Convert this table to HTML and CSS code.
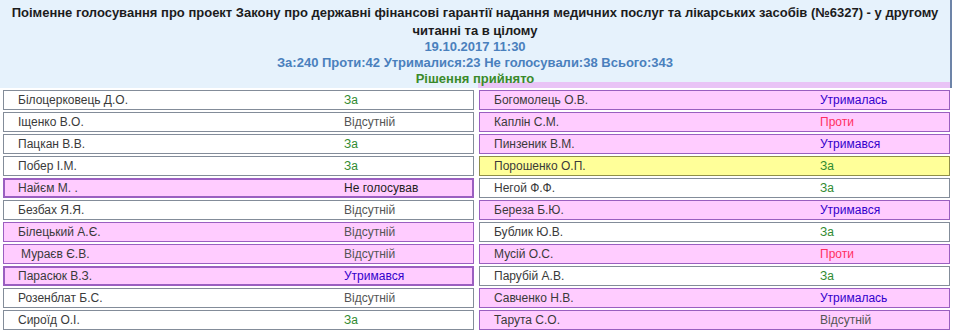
FILE: index.html
```html
<!DOCTYPE html>
<html lang="uk">
<head>
<meta charset="utf-8">
<link rel="stylesheet" href="styles.css">
</head>
<body>
<div class="page">
  <div class="head">
    <div class="title">Поіменне голосування про проект Закону про державні фінансові гарантії надання медичних послуг та лікарських засобів (№6327) - у другому читанні та в цілому</div>
    <div class="date">19.10.2017 11:30</div>
    <div class="totals">За:240 Проти:42 Утрималися:23 Не голосували:38 Всього:343</div>
    <div class="result">Рішення прийнято</div>
  </div>
  <div class="grid">
    <div class="col">
      <div class="row w"><span class="n">Білоцерковець Д.О.</span><span class="v za">За</span></div>
      <div class="row w"><span class="n">Іщенко В.О.</span><span class="v abs">Відсутній</span></div>
      <div class="row w"><span class="n">Пацкан В.В.</span><span class="v za">За</span></div>
      <div class="row w"><span class="n">Побер І.М.</span><span class="v za">За</span></div>
      <div class="row p thick"><span class="n">Найєм М. .</span><span class="v nv">Не голосував</span></div>
      <div class="row w"><span class="n">Безбах Я.Я.</span><span class="v abs">Відсутній</span></div>
      <div class="row p"><span class="n">Білецький А.Є.</span><span class="v abs">Відсутній</span></div>
      <div class="row p shift"><span class="n">Мураєв Є.В.</span><span class="v abs">Відсутній</span></div>
      <div class="row p thick"><span class="n">Парасюк В.З.</span><span class="v utr">Утримався</span></div>
      <div class="row w"><span class="n">Розенблат Б.С.</span><span class="v abs">Відсутній</span></div>
      <div class="row w"><span class="n">Сироїд О.І.</span><span class="v za">За</span></div>
    </div>
    <div class="col">
      <div class="row p"><span class="n">Богомолець О.В.</span><span class="v utr">Утрималась</span></div>
      <div class="row p"><span class="n">Каплін С.М.</span><span class="v pro">Проти</span></div>
      <div class="row p"><span class="n">Пинзеник В.М.</span><span class="v utr">Утримався</span></div>
      <div class="row y"><span class="n">Порошенко О.П.</span><span class="v za">За</span></div>
      <div class="row w"><span class="n">Негой Ф.Ф.</span><span class="v za">За</span></div>
      <div class="row p"><span class="n">Береза Б.Ю.</span><span class="v utr">Утримався</span></div>
      <div class="row w"><span class="n">Бублик Ю.В.</span><span class="v za">За</span></div>
      <div class="row p"><span class="n">Мусій О.С.</span><span class="v pro">Проти</span></div>
      <div class="row w"><span class="n">Парубій А.В.</span><span class="v za">За</span></div>
      <div class="row p"><span class="n">Савченко Н.В.</span><span class="v utr">Утрималась</span></div>
      <div class="row p"><span class="n">Тарута С.О.</span><span class="v abs">Відсутній</span></div>
    </div>
  </div>
</div>
</body>
</html>
```
FILE: styles.css
```css
html, body {
  margin: 0;
  padding: 0;
  background: #ffffff;
}
body {
  font-family: "Liberation Sans", Arial, sans-serif;
  font-size: 12px;
  color: #333333;
}
.page {
  width: 953px;
}
.head {
  height: 88px;
  box-sizing: border-box;
  border-right: 2px solid #6d84a8;
  margin-right: 1px;
  background:
    linear-gradient(#e9c4f6, #e9c4f6) right bottom / 472px 6px no-repeat,
    #e6f2fc;
  text-align: center;
  font-weight: bold;
  font-size: 13px;
  padding: 4px 4px 0 4px;
}
.title {
  color: #1c1c1c;
  line-height: 17.5px;
  padding: 0 4px;
}
.date {
  color: #4a80bd;
  line-height: 15px;
}
.totals {
  color: #4a80bd;
  line-height: 17px;
}
.result {
  color: #3a8a2a;
  line-height: 16px;
}
.grid {
  display: grid;
  grid-template-columns: 471px 471px;
  column-gap: 5px;
  padding: 1px 3px 0 3px;
}
.col {
  display: flex;
  flex-direction: column;
}
.row {
  box-sizing: border-box;
  height: 20px;
  margin: 1px 0;
  display: grid;
  grid-template-columns: 326px 1fr;
  align-items: center;
  padding-left: 14px;
  border: 1px solid #7c8796;
  white-space: nowrap;
}
.row.w {
  background: #ffffff;
  border-color: #838c99;
}
.row.p {
  background: #ffccff;
  border-color: #9a5fc0;
}
.row.thick {
  border-width: 2px;
  padding-left: 13px;
}
.row.shift {
  padding-left: 17px;
  grid-template-columns: 323px 1fr;
}
.row.y {
  background: #ffff99;
  border-color: #8f8f48;
}
.n {
  color: #3a3a3a;
}
.v {
  color: #555555;
}
.v.za {
  color: #2f8a2f;
}
.v.abs {
  color: #555555;
}
.v.utr {
  color: #3300cc;
}
.v.pro {
  color: #ff2f5f;
}
.v.nv {
  color: #1e1e1e;
}
```
